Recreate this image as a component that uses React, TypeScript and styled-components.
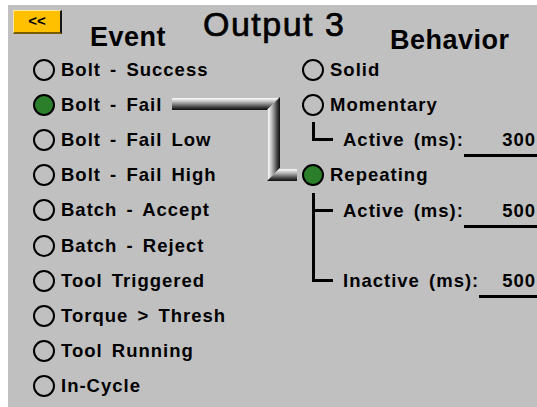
import React from 'react';
import styled, { createGlobalStyle } from 'styled-components';

const GlobalStyle = createGlobalStyle`
  html, body {
    margin: 0;
    padding: 0;
    background: #fff;
  }
  body {
    font-family: "Liberation Sans", Arial, sans-serif;
  }
`;

const events = [
    'Bolt - Success',
    'Bolt - Fail',
    'Bolt - Fail Low',
    'Bolt - Fail High',
    'Batch - Accept',
    'Batch - Reject',
    'Tool Triggered',
    'Torque > Thresh',
    'Tool Running',
    'In-Cycle',
];

const selectedEvent = 1;

export default function App() {
    return (
        <>
            <GlobalStyle/>
            <Screen>
                <Header>
                    <BackButton>&lt;&lt;</BackButton>
                    <SubTitle>Event</SubTitle>
                    <Title>Output 3</Title>
                    <SubTitle $right>Behavior</SubTitle>
                </Header>

                <Body>
                    <Column>
                        {events.map((name, i) => (
                            <Row key={name}>
                                <Radio $on={i === selectedEvent}/>
                                <Label>{name}</Label>
                            </Row>
                        ))}
                    </Column>

                    <Column>
                        <Row>
                            <Radio/>
                            <Label>Solid</Label>
                        </Row>
                        <Row>
                            <Radio/>
                            <Label>Momentary</Label>
                        </Row>
                        <ValueRow>
                            <Branch $kind="end"/>
                            <Label>Active (ms):</Label>
                            <Field>300</Field>
                        </ValueRow>
                        <Row>
                            <Radio $on/>
                            <Label>Repeating</Label>
                        </Row>
                        <ValueRow>
                            <Branch $kind="mid"/>
                            <Label>Active (ms):</Label>
                            <Field>500</Field>
                        </ValueRow>
                        <Row>
                            <Branch $kind="pass"/>
                        </Row>
                        <ValueRow>
                            <Branch $kind="end"/>
                            <Label>Inactive (ms):</Label>
                            <Field>500</Field>
                        </ValueRow>
                    </Column>
                </Body>

                <Pipe width="125" height="84" viewBox="0 0 125 84">
                    <defs>
                        <linearGradient id="pipeV" x1="0" y1="0" x2="0" y2="1">
                            <stop offset="0" stopColor="#a8a8a8"/>
                            <stop offset="0.12" stopColor="#f6f6f6"/>
                            <stop offset="0.4" stopColor="#b4b4b4"/>
                            <stop offset="0.8" stopColor="#3c3c3c"/>
                            <stop offset="1" stopColor="#0c0c0c"/>
                        </linearGradient>
                        <linearGradient id="pipeH" x1="0" y1="0" x2="1" y2="0">
                            <stop offset="0" stopColor="#a8a8a8"/>
                            <stop offset="0.12" stopColor="#f6f6f6"/>
                            <stop offset="0.4" stopColor="#b4b4b4"/>
                            <stop offset="0.8" stopColor="#3c3c3c"/>
                            <stop offset="1" stopColor="#0c0c0c"/>
                        </linearGradient>
                    </defs>
                    <polygon points="0,0 108,0 95,13 0,13" fill="url(#pipeV)"/>
                    <polygon points="108,0 108,71 95,84 95,13" fill="url(#pipeH)"/>
                    <polygon points="95,84 108,71 125,71 125,84" fill="url(#pipeV)"/>
                </Pipe>
            </Screen>
        </>
    );
}

const Screen = styled.div`
    position: relative;
    margin: 5px 0 0 8px;
    width: 529px;
    height: 402px;
    background: #c0c0c0;
    overflow: hidden;
    color: #000;
`

const Header = styled.header`
    display: grid;
    grid-template-columns: 82px 113px 187px 1fr;
    align-items: start;
    height: 47px;
`

const BackButton = styled.button`
    margin: 5px 0 0 5px;
    width: 49px;
    height: 24px;
    padding: 0 0 2px;
    box-sizing: border-box;
    background: #ffc000;
    border-style: solid;
    border-width: 1px 2px 2px 1px;
    border-color: #ffe7a0 #141414 #7a5c00 #ffe7a0;
    font-family: "Liberation Sans", Arial, sans-serif;
    font-weight: 700;
    font-size: 15px;
    line-height: 1;
    color: #000;
    cursor: pointer;
`

const SubTitle = styled.h2<{ $right?: boolean }>`
    margin: ${p => (p.$right ? '22px' : '19px')} 0 0;
    font-family: "Liberation Sans", Arial, sans-serif;
    font-weight: 700;
    font-size: 27px;
    line-height: 1;
    letter-spacing: 0.5px;
`

const Title = styled.h1`
    margin: 2px 0 0;
    font-family: "Liberation Sans", Arial, sans-serif;
    font-weight: 400;
    font-size: 34px;
    line-height: 1;
    letter-spacing: 1.5px;
    -webkit-text-stroke: 0.7px #000;
`

const Body = styled.main`
    display: grid;
    grid-template-columns: 269px 1fr;
    padding-left: 25px;
`

const Column = styled.div`
    display: flex;
    flex-direction: column;
`

const Row = styled.div`
    display: flex;
    align-items: center;
    height: 35.2px;
    gap: 6px;
`

const ValueRow = styled(Row)`
    align-items: baseline;
    gap: 0;
    line-height: 35.2px;
`

const Radio = styled.span<{ $on?: boolean }>`
    flex: none;
    width: 22px;
    height: 22px;
    box-sizing: border-box;
    border: 2px solid #000;
    border-radius: 50%;
    background: ${p => (p.$on ? '#2b7f2b' : 'transparent')};
`

const Label = styled.span`
    font-weight: 700;
    font-size: 18.5px;
    letter-spacing: 1px;
    word-spacing: 3px;
    white-space: pre;
`

const Branch = styled.span<{ $kind: 'mid' | 'end' | 'pass' }>`
    position: relative;
    flex: none;
    align-self: stretch;
    width: 24px;
    margin: 0 7px 0 10px;

    &::before {
        content: '';
        position: absolute;
        left: 0;
        top: 0;
        width: 21px;
        height: calc(50% + 1.5px);
        box-sizing: border-box;
        border-left: 3px solid #000;
        border-bottom: ${p => (p.$kind === 'pass' ? 'none' : '3px solid #000')};
    }

    &::after {
        content: '';
        position: absolute;
        left: 0;
        top: 50%;
        bottom: 0;
        border-left: 3px solid #000;
        display: ${p => (p.$kind === 'end' ? 'none' : 'block')};
    }
`

const Field = styled.span`
    flex: 1;
    margin-right: -4px;
    padding: 0 5px 4px 0;
    border-bottom: 3px solid #000;
    text-align: right;
    font-weight: 700;
    font-size: 18.5px;
    line-height: 20px;
    letter-spacing: 1px;
`

const Pipe = styled.svg`
    position: absolute;
    left: 164px;
    top: 92px;
    pointer-events: none;
`
